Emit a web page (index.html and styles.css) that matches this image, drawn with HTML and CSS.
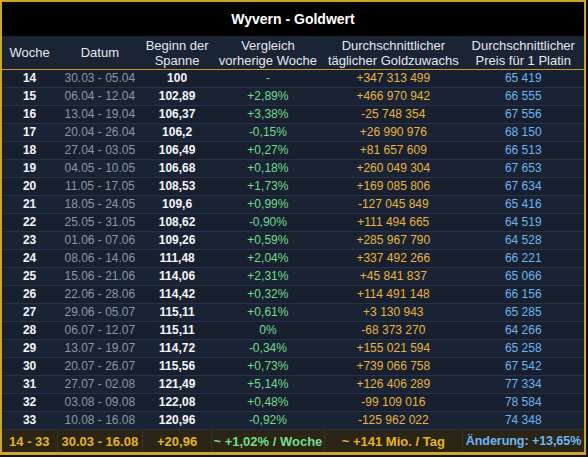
FILE: index.html
```html
<!DOCTYPE html>
<html lang="de">
<head>
<meta charset="utf-8">
<title>Wyvern - Goldwert</title>
<link rel="stylesheet" href="styles.css">
</head>
<body>
<table class="gw">
  <colgroup>
    <col class="c1"><col class="c2"><col class="c3"><col class="c4"><col class="c5"><col class="c6">
  </colgroup>
  <thead>
    <tr class="title"><th colspan="6">Wyvern - Goldwert</th></tr>
    <tr class="head">
      <th>Woche</th>
      <th>Datum</th>
      <th>Beginn der<br>Spanne</th>
      <th>Vergleich<br>vorherige Woche</th>
      <th>Durchschnittlicher<br>täglicher Goldzuwachs</th>
      <th>Durchschnittlicher<br>Preis für 1 Platin</th>
    </tr>
  </thead>
  <tbody>
    <tr><td class="wk">14</td><td class="dt">30.03 - 05.04</td><td class="bg">100</td><td class="pc">-</td><td class="gd">+347 313 499</td><td class="pl">65 419</td></tr>
    <tr><td class="wk">15</td><td class="dt">06.04 - 12.04</td><td class="bg">102,89</td><td class="pc">+2,89%</td><td class="gd">+466 970 942</td><td class="pl">66 555</td></tr>
    <tr><td class="wk">16</td><td class="dt">13.04 - 19.04</td><td class="bg">106,37</td><td class="pc">+3,38%</td><td class="gd">-25 748 354</td><td class="pl">67 556</td></tr>
    <tr><td class="wk">17</td><td class="dt">20.04 - 26.04</td><td class="bg">106,2</td><td class="pc">-0,15%</td><td class="gd">+26 990 976</td><td class="pl">68 150</td></tr>
    <tr><td class="wk">18</td><td class="dt">27.04 - 03.05</td><td class="bg">106,49</td><td class="pc">+0,27%</td><td class="gd">+81 657 609</td><td class="pl">66 513</td></tr>
    <tr><td class="wk">19</td><td class="dt">04.05 - 10.05</td><td class="bg">106,68</td><td class="pc">+0,18%</td><td class="gd">+260 049 304</td><td class="pl">67 653</td></tr>
    <tr><td class="wk">20</td><td class="dt">11.05 - 17.05</td><td class="bg">108,53</td><td class="pc">+1,73%</td><td class="gd">+169 085 806</td><td class="pl">67 634</td></tr>
    <tr><td class="wk">21</td><td class="dt">18.05 - 24.05</td><td class="bg">109,6</td><td class="pc">+0,99%</td><td class="gd">-127 045 849</td><td class="pl">65 416</td></tr>
    <tr><td class="wk">22</td><td class="dt">25.05 - 31.05</td><td class="bg">108,62</td><td class="pc">-0,90%</td><td class="gd">+111 494 665</td><td class="pl">64 519</td></tr>
    <tr><td class="wk">23</td><td class="dt">01.06 - 07.06</td><td class="bg">109,26</td><td class="pc">+0,59%</td><td class="gd">+285 967 790</td><td class="pl">64 528</td></tr>
    <tr><td class="wk">24</td><td class="dt">08.06 - 14.06</td><td class="bg">111,48</td><td class="pc">+2,04%</td><td class="gd">+337 492 266</td><td class="pl">66 221</td></tr>
    <tr><td class="wk">25</td><td class="dt">15.06 - 21.06</td><td class="bg">114,06</td><td class="pc">+2,31%</td><td class="gd">+45 841 837</td><td class="pl">65 066</td></tr>
    <tr><td class="wk">26</td><td class="dt">22.06 - 28.06</td><td class="bg">114,42</td><td class="pc">+0,32%</td><td class="gd">+114 491 148</td><td class="pl">66 156</td></tr>
    <tr><td class="wk">27</td><td class="dt">29.06 - 05.07</td><td class="bg">115,11</td><td class="pc">+0,61%</td><td class="gd">+3 130 943</td><td class="pl">65 285</td></tr>
    <tr><td class="wk">28</td><td class="dt">06.07 - 12.07</td><td class="bg">115,11</td><td class="pc">0%</td><td class="gd">-68 373 270</td><td class="pl">64 266</td></tr>
    <tr><td class="wk">29</td><td class="dt">13.07 - 19.07</td><td class="bg">114,72</td><td class="pc">-0,34%</td><td class="gd">+155 021 594</td><td class="pl">65 258</td></tr>
    <tr><td class="wk">30</td><td class="dt">20.07 - 26.07</td><td class="bg">115,56</td><td class="pc">+0,73%</td><td class="gd">+739 066 758</td><td class="pl">67 542</td></tr>
    <tr><td class="wk">31</td><td class="dt">27.07 - 02.08</td><td class="bg">121,49</td><td class="pc">+5,14%</td><td class="gd">+126 406 289</td><td class="pl">77 334</td></tr>
    <tr><td class="wk">32</td><td class="dt">03.08 - 09.08</td><td class="bg">122,08</td><td class="pc">+0,48%</td><td class="gd">-99 109 016</td><td class="pl">78 584</td></tr>
    <tr><td class="wk">33</td><td class="dt">10.08 - 16.08</td><td class="bg">120,96</td><td class="pc">-0,92%</td><td class="gd">-125 962 022</td><td class="pl">74 348</td></tr>
  </tbody>
  <tfoot>
    <tr class="foot">
      <td>14 - 33</td>
      <td>30.03 - 16.08</td>
      <td>+20,96</td>
      <td class="fpc">~ +1,02% / Woche</td>
      <td>~ +141 Mio. / Tag</td>
      <td class="fpl">Änderung: +13,65%</td>
    </tr>
  </tfoot>
</table>
</body>
</html>
```

FILE: styles.css
```css
html, body {
  margin: 0;
  padding: 0;
  background: #0e131c;
}

.gw {
  width: 586px;
  border-collapse: collapse;
  table-layout: fixed;
  font-family: "Liberation Sans", Arial, sans-serif;
  border: 2px solid #d3a42a;
  border-bottom-width: 3px;
  background: #161d2b;
}

.c1 { width: 56px; }
.c2 { width: 85px; }
.c3 { width: 69px; }
.c4 { width: 112px; }
.c5 { width: 138px; }
.c6 { width: 122px; }

.title th {
  background: #000;
  color: #fff;
  font-size: 14px;
  font-weight: bold;
  height: 34px;
  padding: 0;
  text-align: center;
}

.head th {
  background: #1b2435;
  color: #e3e8ef;
  font-size: 13px;
  font-weight: normal;
  line-height: 15px;
  height: 33px;
  padding: 0;
  text-align: center;
  white-space: nowrap;
  border-bottom: 1px solid #c39a2c;
}

tbody tr:nth-child(odd) { background: #18202f; }
tbody tr:nth-child(even) { background: #1a2333; }

tbody td {
  height: 17px;
  padding: 0;
  font-size: 12px;
  line-height: 17px;
  text-align: center;
  white-space: nowrap;
  border-bottom: 1px solid #283244;
}

.wk { color: #f4f6fa; font-weight: bold; }
.dt { color: #8c96a3; }
.bg { color: #f4f6fa; font-weight: bold; }
.pc { color: #6fdc8c; }
.gd { color: #e6b43e; }
.pl { color: #68b5f0; }

.foot td {
  background: #2a2517;
  color: #e6b324;
  font-size: 13px;
  font-weight: bold;
  height: 22px;
  padding: 0;
  text-align: center;
  white-space: nowrap;
  border-left: 1px solid #3a3322;
}

.foot td:first-child { border-left: none; }
.foot .fpc { color: #72de8e; }
.foot .fpl { color: #6cb8f2; font-size: 12.6px; letter-spacing: -0.1px; }
```
